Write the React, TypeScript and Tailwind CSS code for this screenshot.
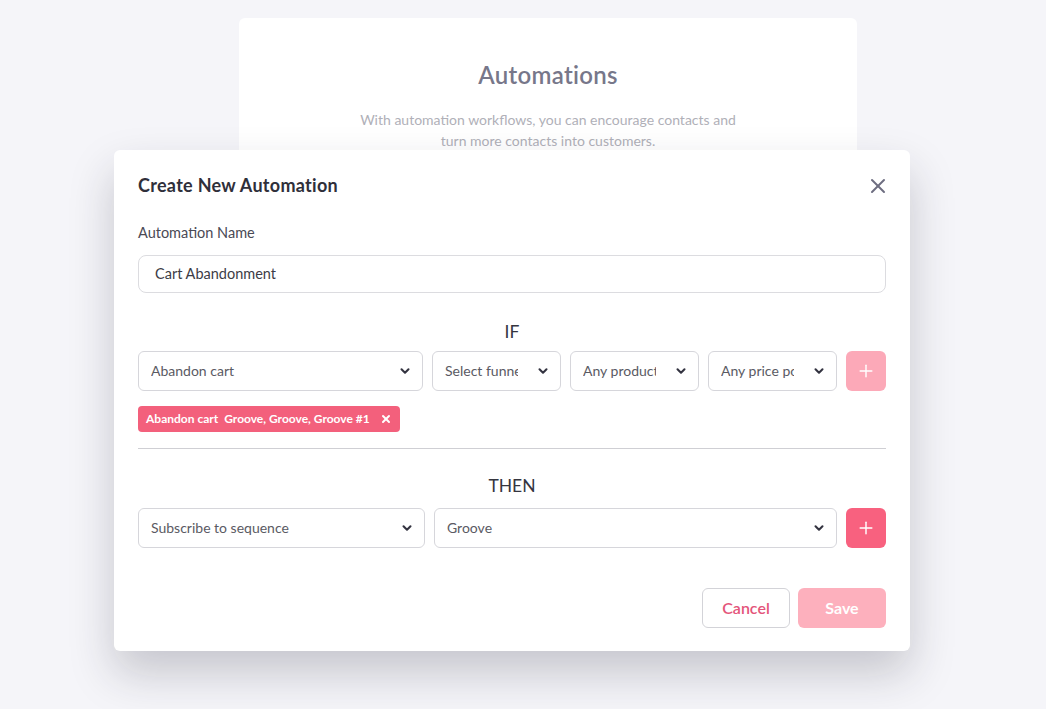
import { ChevronDown, Plus, X } from 'lucide-react'

const font = { fontFamily: 'Lato, "Noto Sans", sans-serif' }

function Select({ value, className = '' }: { value: string; className?: string }) {
  return (
    <div className={`relative h-10 rounded-md border border-[#d6d6db] bg-white ${className}`}>
      <div className="ml-3 mr-[42px] h-full overflow-hidden whitespace-nowrap text-[14px] leading-[38px] text-[#5a5a63]">
        {value}
      </div>
      <ChevronDown className="absolute right-2.5 top-1/2 h-3.5 w-3.5 -translate-y-1/2 text-[#333340]" strokeWidth={3.5} />
    </div>
  )
}

function AddButton({ disabled }: { disabled?: boolean }) {
  return (
    <button
      className={`flex h-10 w-10 shrink-0 items-center justify-center rounded-md text-white ${
        disabled ? 'bg-[#fca9b8]' : 'bg-[#f8617f]'
      }`}
    >
      <Plus className="h-5 w-5" strokeWidth={1.75} />
    </button>
  )
}

export default function App() {
  return (
    <div className="relative h-[709px] w-full overflow-hidden bg-[#f5f5f9]" style={font}>
      {/* Page behind the dialog */}
      <div className="ml-[239px] mt-[18px] h-[560px] w-[618px] rounded-md bg-white pt-[39px] text-center">
        <h1 className="text-[24px] font-semibold tracking-[0.3px] text-[#77778a]">Automations</h1>
        <p className="mx-auto mt-[16px] w-[400px] text-[14px] leading-[21px] text-[#b0b0b8]">
          With automation workflows, you can encourage contacts and turn more contacts into customers.
        </p>
      </div>

      {/* Dialog */}
      <div className="absolute left-[114px] top-[150px] w-[796px] rounded-md bg-white px-6 pb-[23px] pt-[22px] shadow-[0_22px_45px_rgba(30,30,50,0.22)]">
        <div className="flex items-center justify-between">
          <h2 className="text-[18px] font-bold tracking-[0.3px] text-[#2f2f3a]">Create New Automation</h2>
          <X className="mr-[-4px] h-6 w-6 text-[#6d6d80]" strokeWidth={2} />
        </div>

        <label className="mt-[23px] block text-[14.5px] text-[#4a4a55]">Automation Name</label>
        <div className="mt-[11px] h-[38px] rounded-lg border border-[#dcdce0] px-4 text-[14.5px] leading-[36px] text-[#3c3c46]">
          Cart Abandonment
        </div>

        <div className="mt-[26px] text-center text-[17.5px] text-[#35353f]">IF</div>
        <div className="mt-[6px] flex gap-[9px]">
          <Select value="Abandon cart" className="w-[287px]" />
          <Select value="Select funnel" className="w-[129px]" />
          <Select value="Any product" className="w-[129px]" />
          <Select value="Any price point" className="w-[129px]" />
          <AddButton disabled />
        </div>

        <div className="mt-[15px] inline-flex h-[26px] items-center gap-1.5 rounded bg-[#f3607c] px-2 text-[12px] font-bold text-white">
          <span>Abandon cart</span>
          <span>Groove, Groove, Groove #1</span>
          <X className="ml-1 h-3 w-3" strokeWidth={4} />
        </div>

        <div className="mt-[16px] border-t border-[#cfcfd4]" />

        <div className="mt-[24px] text-center text-[17.5px] text-[#35353f]">THEN</div>
        <div className="mt-[9px] flex gap-[9px]">
          <Select value="Subscribe to sequence" className="w-[287px]" />
          <Select value="Groove" className="flex-1" />
          <AddButton />
        </div>

        <div className="mt-[40px] flex justify-end gap-2">
          <button className="h-10 w-[88px] rounded-md border border-[#d3d3d8] bg-white text-[16px] font-semibold text-[#e4557a]">
            Cancel
          </button>
          <button className="h-10 w-[88px] rounded-md bg-[#fdb0bd] text-[16px] font-bold text-white">Save</button>
        </div>
      </div>
    </div>
  )
}
